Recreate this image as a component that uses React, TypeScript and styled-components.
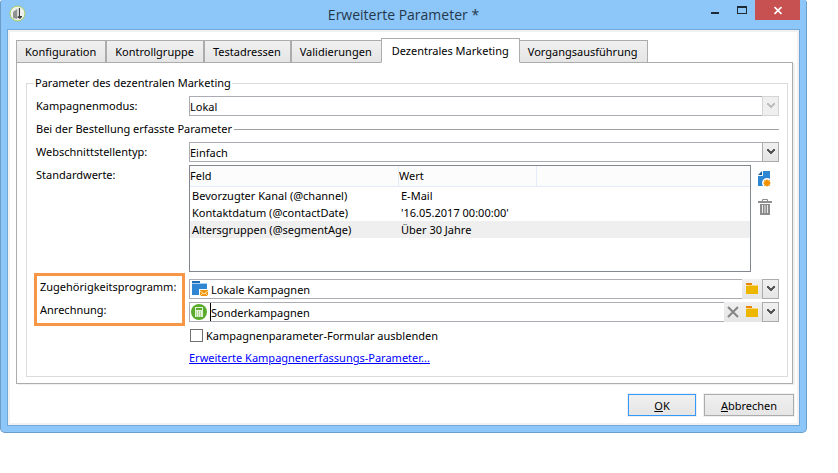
import React from "react";
import styled, { createGlobalStyle, css } from "styled-components";

const GlobalStyle = createGlobalStyle`
  *, *::before, *::after { box-sizing: border-box; }
  body { margin: 0; background: #fff; }
  body, button, input, select { font-family: "Noto Sans", "Open Sans", sans-serif; font-size: 11px; color: #000; }
`;

const face = css`
  background: linear-gradient(#f0f0f0, #e5e5e5);
`;

const Window = styled.main`
  margin-right: 31px;
  padding: 0 6px;
  padding-bottom: 6px;
  background: #8dc7fa;
  border: 1px solid #6c9dc6;
  border-top: 0;
  border-radius: 3px 3px 5px 5px;
`;

const TitleBar = styled.header`
  display: grid;
  grid-template-columns: 1fr auto 1fr;
  height: 29px;
`;

const AppIcon = styled.div`
  padding: 5px 0 0 2px;
  svg { display: block; }
`;

const Title = styled.h1`
  margin: 0;
  font-family: "Open Sans", sans-serif;
  font-size: 14px;
  line-height: 29px;
  font-weight: 400;
  color: #24384b;
`;

const Controls = styled.div`
  display: flex;
  justify-content: flex-end;
  align-items: flex-start;
`;

const ControlButton = styled.button<{ $close?: boolean }>`
  width: ${(p) => (p.$close ? 45 : 27)}px;
  height: 20px;
  padding: 0;
  border: 0;
  background: ${(p) => (p.$close ? "#c75050" : "transparent")};
  svg { display: block; margin: 0 auto; }
`;

const Client = styled.div`
  padding: 8px 5px 9px 6px;
  background: #fff;
  border: 1px solid #70a7d7;
  box-shadow: inset 0 0 0 2px #f1f1f1;
`;

const TabList = styled.div`
  display: flex;
  align-items: flex-end;
  padding-left: 2px;
`;

const Tab = styled.button<{ $active?: boolean }>`
  height: 23px;
  padding: 0 9px 0 8px;
  border: 1px solid #acacac;
  line-height: 20px;
  white-space: nowrap;
  ${face}
  ${(p) =>
    p.$active &&
    css`
      height: 25px;
      padding: 0 10px;
      margin: 0 -1px;
      border-bottom-color: #fff;
      background: #fff;
      z-index: 1;
    `}
`;

const Panel = styled.section`
  margin: -1px 1px 0 2px;
  padding: 12px 4px 6px 9px;
  border: 1px solid #acacac;
  box-shadow: 2px 1px 0 #f0f0f0;
`;

const Group = styled.fieldset`
  margin: 0;
  min-width: 0;
  padding: 5px 8px 8px 7px;
  border: 1px solid #dcdcdc;
`;

const Legend = styled.legend`
  padding: 0 1px;
  line-height: 16px;
`;

const Stack = styled.div`
  display: flex;
  flex-direction: column;
  gap: 3px;
`;

const Row = styled.div`
  display: grid;
  grid-template-columns: 155px minmax(0, 1fr);
  align-items: start;
`;

const Label = styled.label`
  padding-left: 2px;
  line-height: 19px;
  height: 20px;
  white-space: nowrap;
`;

const SectionTitle = styled.h2`
  display: flex;
  align-items: center;
  gap: 2px;
  margin: 0;
  padding-left: 2px;
  font-size: 11px;
  font-weight: 400;
  line-height: 20px;
  &::after { content: ""; flex: 1; height: 1px; background: #a0a0a0; }
`;

const Combo = styled.div`
  display: grid;
  grid-template-columns: minmax(0, 1fr) 17px;
  height: 20px;
`;

const Select = styled.select`
  grid-area: 1 / 1 / 2 / 3;
  appearance: none;
  height: 20px;
  padding: 0 17px 0 0;
  border: 1px solid #abadb3;
  border-radius: 0;
  background: #fff;
  opacity: 1;
  color: #000;
`;

const Arrow = styled.span<{ $off?: boolean }>`
  grid-area: 1 / 2;
  display: grid;
  place-items: center;
  pointer-events: none;
  border: 1px solid ${(p) => (p.$off ? "#d5d5d5" : "#acacac")};
  color: ${(p) => (p.$off ? "#bfbfbf" : "#555")};
  ${face}
  ${(p) => p.$off && "background: #efefef;"}
`;

const ListArea = styled.div`
  display: grid;
  grid-template-columns: minmax(0, 1fr) 28px;
`;

const ListBox = styled.div`
  height: 107px;
  border: 1px solid #828790;
`;

const Table = styled.table`
  width: 100%;
  table-layout: fixed;
  border-collapse: separate;
  border-spacing: 0;
`;

const HeadCell = styled.th<{ $width?: number }>`
  width: ${(p) => (p.$width ? `${p.$width}px` : "auto")};
  height: 21px;
  padding: 0;
  text-align: left;
  font-weight: 400;
  line-height: 20px;
  background: #fcfcfc;
  border-bottom: 1px solid #e3edfa;
  border-right: ${(p) => (p.$width ? "1px solid #e3edfa" : "0")};
`;

const BodyRow = styled.tr<{ $selected?: boolean }>`
  background: ${(p) => (p.$selected ? "#efefef" : "#fff")};
`;

const Cell = styled.td`
  height: 17px;
  padding: 0 0 0 2px;
  line-height: 17px;
  white-space: nowrap;
`;

const ToolColumn = styled.div`
  display: flex;
  flex-direction: column;
  gap: 10px;
  padding: 5px 0 0 5px;
`;

const ToolButton = styled.button`
  width: 18px;
  height: 18px;
  padding: 0;
  border: 0;
  background: transparent;
  svg { display: block; margin: 0 auto; }
`;

const LabelFrame = styled.div`
  display: flex;
  flex-direction: column;
  gap: 3px;
  margin-right: 4px;
  padding: 1px 0 3px 1px;
  border: 3px solid #f79646;
`;

const LinkedRow = styled(Row)`
  padding-top: 1px;
`;

const FieldStack = styled(Stack)`
  padding-top: 6px;
`;

const Field = styled.div`
  display: flex;
  height: 20px;
`;

const InputBox = styled.div`
  flex: 1;
  min-width: 0;
  display: flex;
  align-items: center;
  padding-left: 1px;
  border: 1px solid #abadb3;
  border-right: 0;
  svg { flex: none; }
`;

const TextInput = styled.input<{ $gap?: number }>`
  flex: 1;
  min-width: 0;
  height: 18px;
  margin-left: ${(p) => p.$gap ?? 0}px;
  padding: 0;
  border: 0;
  outline: 0;
  background: transparent;
`;

const Caret = styled.span`
  width: 1px;
  height: 18px;
  margin-left: 3px;
  background: #000;
`;

const FieldButton = styled.button<{ $width: number; $outlined?: boolean }>`
  display: grid;
  place-items: center;
  width: ${(p) => p.$width}px;
  height: 20px;
  padding: 0;
  border: ${(p) => (p.$outlined ? "1px solid #acacac" : "0")};
  color: #555;
  ${face}
`;

const CheckRow = styled.label`
  display: flex;
  align-items: center;
  gap: 3px;
  height: 20px;
  padding-left: 1px;
`;

const Checkbox = styled.input`
  appearance: none;
  width: 13px;
  height: 13px;
  margin: 0;
  border: 1px solid #707070;
  background: #fff;
  &:checked { background: #3399ff; }
`;

const Link = styled.a`
  align-self: flex-start;
  line-height: 20px;
  color: #00f;
`;

const Footer = styled.footer`
  display: flex;
  justify-content: flex-end;
  gap: 8px;
  margin-top: 10px;
`;

const DialogButton = styled.button<{ $primary?: boolean }>`
  width: ${(p) => (p.$primary ? 68 : 90)}px;
  height: 22px;
  padding: 0;
  border: 1px solid ${(p) => (p.$primary ? "#3399ff" : "#acacac")};
  box-shadow: 0 0 0 1px #f0f0f0;
  ${face}
`;

const Chevron = () => (
  <svg width="8" height="6" viewBox="0 0 8 6" aria-hidden="true">
    <path d="M0 0h2v1h1v1h2V1h1V0h2v2H7v1H6v1H5v1H3V4H2V3H1V2H0z" fill="currentColor" />
  </svg>
);

const FolderIcon = () => (
  <svg width="12" height="12" viewBox="0 0 12 12" aria-hidden="true">
    <path d="M0 0h6v2H0z" fill="#e8860c" />
    <path d="M1 2h11v1H1z" fill="#f7d774" />
    <path d="M0 3h12v8H0z" fill="#edb700" />
  </svg>
);

const ClearIcon = () => (
  <svg width="12" height="12" viewBox="0 0 12 12" aria-hidden="true">
    <path d="M1 1l10 10M11 1L1 11" stroke="#858585" strokeWidth="2" />
  </svg>
);

const CampaignIcon = () => (
  <svg width="17" height="16" viewBox="0 0 17 16" aria-hidden="true">
    <path d="M1 0h8v2H1z" fill="#1f6fb8" />
    <path d="M1 3h15v5H8v6H1z" fill="#2f86d3" />
    <path d="M1 2.500h15" stroke="#a9d0f0" />
    <path d="M9 9h8v6H9z" fill="#ee950c" />
    <path d="M9 10l4 3 4-3M9 15l3-3M17 15l-3-3" fill="none" stroke="#fde1b0" />
  </svg>
);

const CalculatorIcon = () => (
  <svg width="16" height="16" viewBox="0 0 16 16" aria-hidden="true">
    <circle cx="8" cy="8" r="8" fill="#58ab2c" />
    <path d="M4 3h8v10H4z" fill="#e2f2d8" />
    <path d="M5 4h6v2H5z" fill="#58ab2c" />
    <path d="M5 8h6M5 10h6M5 12h6" stroke="#7fbf5c" strokeDasharray="1 1" />
  </svg>
);

const NewIcon = () => (
  <svg width="14" height="16" viewBox="0 0 14 16" aria-hidden="true">
    <path d="M5 0h7v15H0V5h5z" fill="#2f86d3" />
    <path d="M4 0v4H0z" fill="#1c5f9f" />
    <circle cx="9" cy="12" r="5" fill="#fff" />
    <path d="M9 8v8M5 12h8M6 9l6 6M12 9l-6 6" stroke="#f6b04a" />
    <circle cx="9" cy="12" r="3" fill="#f29100" />
  </svg>
);

const TrashIcon = () => (
  <svg width="14" height="16" viewBox="0 0 14 16" aria-hidden="true">
    <path d="M4.500 2.500V.5h5v2" fill="none" stroke="#8c8c8c" />
    <path d="M0 2h14v2H0z" fill="#8f8f8f" />
    <path d="M2 5h10v11H2z" fill="#8c8c8c" />
    <path d="M4.500 6v8M7 6v8M9.500 6v8" stroke="#e9e9e9" />
  </svg>
);

const LogoIcon = () => (
  <svg width="17" height="17" viewBox="0 0 17 17" aria-hidden="true">
    <circle cx="8.500" cy="8.500" r="7.500" fill="#eef0ec" stroke="#a5cc5d" />
    <path d="M4 7l4-3v10l-4-1z" fill="#8f938f" />
    <path d="M8 4l2-1v9l-2 2z" fill="#d6d8d6" />
    <path d="M10 3h1v8h2v1l-2 2-3-2 2-1z" fill="#3a3d3b" />
  </svg>
);

const tabs = [
  "Konfiguration",
  "Kontrollgruppe",
  "Testadressen",
  "Validierungen",
  "Dezentrales Marketing",
  "Vorgangsausführung",
];

const rows = [
  ["Bevorzugter Kanal (@channel)", "E-Mail"],
  ["Kontaktdatum (@contactDate)", "'16.05.2017 00:00:00'"],
  ["Altersgruppen (@segmentAge)", "Über 30 Jahre"],
];

export default function App() {
  return (
    <>
      <GlobalStyle />
      <Window>
        <TitleBar>
          <AppIcon><LogoIcon /></AppIcon>
          <Title>Erweiterte Parameter *</Title>
          <Controls>
            <ControlButton aria-label="Minimieren">
              <svg width="8" height="20"><path d="M0 12h8v2H0z" fill="#1e2a35" /></svg>
            </ControlButton>
            <ControlButton aria-label="Maximieren">
              <svg width="10" height="20"><path d="M0 6h10v8H0zM1 8v5h8V8z" fill="#1e2a35" fillRule="evenodd" /></svg>
            </ControlButton>
            <ControlButton $close aria-label="Schließen">
              <svg width="8" height="20"><path d="M.5 7l7 7M7.500 7l-7 7" stroke="#fff" strokeWidth="1.700" /></svg>
            </ControlButton>
          </Controls>
        </TitleBar>
        <Client>
          <TabList role="tablist">
            {tabs.map((name, i) => (
              <Tab key={name} role="tab" aria-selected={i === 4} $active={i === 4}>{name}</Tab>
            ))}
          </TabList>
          <Panel role="tabpanel">
            <Group>
              <Legend>Parameter des dezentralen Marketing</Legend>
              <Stack>
                <Row>
                  <Label htmlFor="mode">Kampagnenmodus:</Label>
                  <Combo>
                    <Select id="mode" disabled><option>Lokal</option></Select>
                    <Arrow $off><Chevron /></Arrow>
                  </Combo>
                </Row>
                <SectionTitle>Bei der Bestellung erfasste Parameter</SectionTitle>
                <Row>
                  <Label htmlFor="web">Webschnittstellentyp:</Label>
                  <Combo>
                    <Select id="web"><option>Einfach</option></Select>
                    <Arrow><Chevron /></Arrow>
                  </Combo>
                </Row>
                <Row>
                  <Label as="span" id="defaults">Standardwerte:</Label>
                  <ListArea>
                    <ListBox>
                      <Table aria-labelledby="defaults">
                        <thead>
                          <tr>
                            <HeadCell $width={209}>Feld</HeadCell>
                            <HeadCell $width={138}>Wert</HeadCell>
                            <HeadCell aria-hidden="true" />
                          </tr>
                        </thead>
                        <tbody>
                          {rows.map(([field, value], i) => (
                            <BodyRow key={field} $selected={i === 2}>
                              <Cell>{field}</Cell>
                              <Cell>{value}</Cell>
                              <Cell />
                            </BodyRow>
                          ))}
                        </tbody>
                      </Table>
                    </ListBox>
                    <ToolColumn>
                      <ToolButton aria-label="Hinzufügen"><NewIcon /></ToolButton>
                      <ToolButton aria-label="Löschen"><TrashIcon /></ToolButton>
                    </ToolColumn>
                  </ListArea>
                </Row>
              </Stack>
              <LinkedRow>
                <LabelFrame>
                  <Label htmlFor="program">Zugehörigkeitsprogramm:</Label>
                  <Label htmlFor="charge">Anrechnung:</Label>
                </LabelFrame>
                <FieldStack>
                  <Field>
                    <InputBox>
                      <CampaignIcon />
                      <TextInput id="program" $gap={3} defaultValue="Lokale Kampagnen" />
                    </InputBox>
                    <FieldButton $width={20} aria-label="Ordner wählen"><FolderIcon /></FieldButton>
                    <FieldButton $width={17} $outlined aria-label="Liste öffnen"><Chevron /></FieldButton>
                  </Field>
                  <Field>
                    <InputBox>
                      <CalculatorIcon />
                      <Caret />
                      <TextInput id="charge" defaultValue="Sonderkampagnen" />
                    </InputBox>
                    <FieldButton $width={18} aria-label="Leeren"><ClearIcon /></FieldButton>
                    <FieldButton $width={20} aria-label="Ordner wählen"><FolderIcon /></FieldButton>
                    <FieldButton $width={17} $outlined aria-label="Liste öffnen"><Chevron /></FieldButton>
                  </Field>
                  <CheckRow>
                    <Checkbox type="checkbox" />
                    Kampagnenparameter-Formular ausblenden
                  </CheckRow>
                  <Link href="#parameter">Erweiterte Kampagnenerfassungs-Parameter...</Link>
                </FieldStack>
              </LinkedRow>
            </Group>
          </Panel>
          <Footer>
            <DialogButton $primary><u>O</u>K</DialogButton>
            <DialogButton><u>A</u>bbrechen</DialogButton>
          </Footer>
        </Client>
      </Window>
    </>
  );
}
